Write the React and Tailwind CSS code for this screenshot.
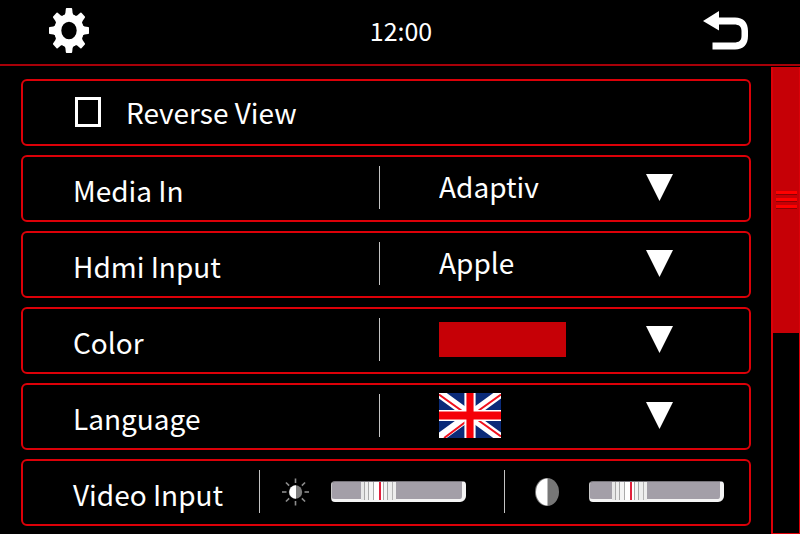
import { useState } from "react";

const TEETH = [0, 45, 90, 135, 180, 225, 270, 315];

function GearIcon() {
  return (
    <svg className="w-10 h-[45px]" viewBox="0 0 40 40" preserveAspectRatio="none" fill="#fff">
      <path
        fillRule="evenodd"
        d="M20 5.3a14.7 14.7 0 1 1 0 29.4a14.7 14.7 0 1 1 0-29.4zM20 12.3a7.7 7.7 0 1 0 0 15.4a7.7 7.7 0 1 0 0-15.4z"
      />
      {TEETH.map((angle) => (
        <path
          key={angle}
          transform={`rotate(${angle} 20 20)`}
          d="M17.6 0h4.8q.7 0 .8.8l.4 3.6q.3 1.7 2.4 2.8h-12q2.1-1.1 2.4-2.8l.4-3.6q.1-.8.8-.8z"
        />
      ))}
    </svg>
  );
}

function BackIcon() {
  return (
    <svg className="w-[46px] h-[39px]" viewBox="0 0 46 39" fill="#fff">
      <path d="M0 10L16 0v6.5h16C40.500 6.500 45 11.500 45 20v5C45 33.500 40.500 38.500 32 38.500H9.500V31.500H31C36 31.500 38.500 29.500 38.500 25v-5C38.500 15.500 36 13.500 31 13.500H16V19.500z" />
    </svg>
  );
}

function Arrow() {
  return (
    <svg className="w-[27px] h-[27px] shrink-0 pointer-events-none" viewBox="0 0 27 27" fill="#fff">
      <path d="M0 0h27L13.500 27z" />
    </svg>
  );
}

function Flag() {
  return (
    <svg className="w-[62px] h-[45px]" viewBox="0 0 61 45" preserveAspectRatio="none">
      <rect width="61" height="45" fill="#0a2a78" />
      <path d="M0 0L61 45M61 0L0 45" stroke="#fff" strokeWidth="9" />
      <path
        d="M0 1.500L22 17.500M61 1.500L39 17.500M5 45L26 29M61 43.500L39 27.500"
        stroke="#f0101c"
        strokeWidth="2"
      />
      <path d="M30.500 0V45M0 22.500H61" stroke="#fff" strokeWidth="11" />
      <path d="M30.500 0V45" stroke="#f50008" strokeWidth="7" />
      <path d="M0 22.500H61" stroke="#f50008" strokeWidth="8" />
    </svg>
  );
}

function BrightnessIcon() {
  return (
    <svg className="w-[27px] h-7 shrink-0" viewBox="0 0 27 28">
      {TEETH.map((angle) => (
        <path
          key={angle}
          transform={`rotate(${angle} 13.5 14)`}
          d="M13.500 .5v4.500"
          stroke="#8c8c8c"
          strokeWidth="1.600"
        />
      ))}
      <circle cx="13.500" cy="14" r="6.700" fill="#7d7d7d" />
      <path d="M14 7.300a6.700 6.700 0 0 0 0 13.400z" fill="#fff" />
    </svg>
  );
}

function ContrastIcon() {
  return (
    <svg className="w-6 h-7 shrink-0" viewBox="0 0 24 28">
      <ellipse cx="12" cy="14" rx="12" ry="14" fill="#777" />
      <path d="M12.500 0.500A11.500 13.500 0 0 0 12.500 27.500z" fill="#fff" />
    </svg>
  );
}

function Row({ children }) {
  return (
    <div className="flex items-center h-[67px] border-2 border-[#dc0008] rounded-md pl-[50px] pb-0.5">
      {children}
    </div>
  );
}

function Divider() {
  return <div className="w-px h-[43px] bg-[#c4c4c4] shrink-0" />;
}

function DropRow({ id, label, options, preview }) {
  const [value, setValue] = useState(options[0]);
  return (
    <Row>
      <label htmlFor={id} className="w-[306px] shrink-0 pt-1">
        {label}
      </label>
      <Divider />
      <div className="relative flex flex-1 items-center pl-[59px] pr-[76px]">
        {preview ? <div className="flex-1">{preview}</div> : null}
        <select
          id={id}
          value={value}
          onChange={(e) => setValue(e.target.value)}
          className={
            preview
              ? "absolute inset-0 opacity-0"
              : "appearance-none flex-1 min-w-0 h-10 mb-1 bg-transparent text-white outline-none"
          }
        >
          {options.map((x) => (
            <option key={x}>{x}</option>
          ))}
        </select>
        <Arrow />
      </div>
    </Row>
  );
}

function Slider({ label, start }) {
  const [value, setValue] = useState(start);
  return (
    <input
      type="range"
      aria-label={label}
      value={value}
      onChange={(e) => setValue(e.target.value)}
      className="appearance-none w-[135px] h-[21px] rounded-sm rounded-br-md bg-[#a39fa8] border-t border-l border-t-[#77757b] border-l-[#c8c8c8] border-r-4 border-b-[3px] border-r-[#f4f4f4] border-b-[#f4f4f4] [&::-webkit-slider-thumb]:appearance-none [&::-webkit-slider-thumb]:w-[35px] [&::-webkit-slider-thumb]:h-[18px] [&::-webkit-slider-thumb]:bg-[linear-gradient(90deg,#e8e8e8_0_3px,#a8a8a8_3px_4px,#eee_4px_7px,#a8a8a8_7px_8px,#f4f4f4_8px_12px,#aaa_12px_13px,#fff_13px_18px,#e0203c_18px_20px,#fff_20px_22px,#aaa_22px_23px,#f4f4f4_23px_26px,#a8a8a8_26px_27px,#eee_27px_31px,#b4b4b4_31px_32px,#eee_32px_35px)]"
    />
  );
}

function Grip() {
  return <div className="h-1 bg-[#ff0000] border-b border-[#8c0004]" />;
}

function Scrollbar() {
  return (
    <div className="w-[29px] mt-px border-l-2 border-r border-b-2 border-[#dc0008]">
      <div className="flex flex-col justify-center gap-[3px] h-[57%] pl-[3px] pr-0.5 bg-[#c60006]">
        <Grip />
        <Grip />
        <Grip />
      </div>
    </div>
  );
}

export default function App() {
  const [reverse, setReverse] = useState(false);

  return (
    <div className="flex flex-col min-h-screen bg-black text-white text-[28px] leading-10 font-['Noto_Sans_CJK_SC',sans-serif]">
      <header className="flex items-center justify-between h-[66px] pl-[49px] pr-[51px] pb-1 border-b-2 border-[#a80008]">
        <button aria-label="Settings">
          <GearIcon />
        </button>
        <time className="pl-2.5 text-[25px]">12:00</time>
        <button aria-label="Back">
          <BackIcon />
        </button>
      </header>

      <div className="flex flex-1">
        <main className="flex flex-1 flex-col gap-[9px] pt-[13px] pb-[9px] pl-[21px] pr-5">
          <Row>
            <label className="flex items-center gap-[25px]">
              <input
                type="checkbox"
                checked={reverse}
                onChange={(e) => setReverse(e.target.checked)}
                className="appearance-none w-[26px] h-[30px] ml-0.5 border-3 border-white checked:bg-[#c60006]"
              />
              Reverse View
            </label>
          </Row>
          <DropRow id="media" label="Media In" options={["Adaptiv"]} />
          <DropRow id="hdmi" label="Hdmi Input" options={["Apple"]} />
          <DropRow
            id="color"
            label="Color"
            options={["Red"]}
            preview={<div className="w-[127px] h-[35px] bg-[#c60006]" />}
          />
          <DropRow id="language" label="Language" options={["English"]} preview={<Flag />} />
          <Row>
            <span className="w-[186px] pt-1 shrink-0">Video Input</span>
            <div className="flex flex-1 items-center gap-[22px]">
              <Divider />
              <BrightnessIcon />
              <Slider label="Brightness" start={30} />
            </div>
            <div className="flex flex-1 items-center gap-[30px]">
              <Divider />
              <ContrastIcon />
              <Slider label="Contrast" start={23} />
            </div>
          </Row>
        </main>
        <Scrollbar />
      </div>
    </div>
  );
}
